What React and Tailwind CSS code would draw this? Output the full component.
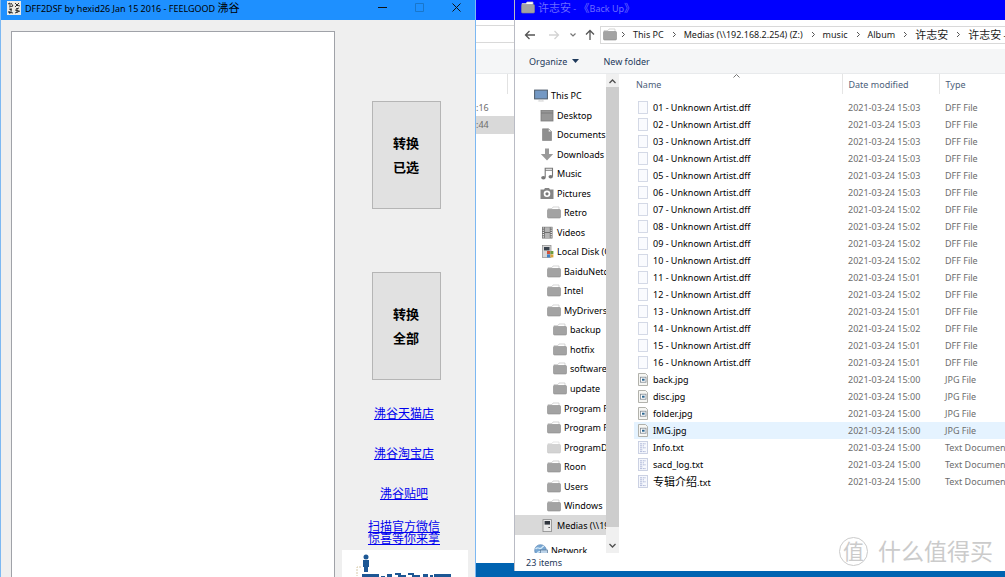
import React, { useState } from 'react';

const tree = [
  { name: 'This PC', icon: 'pc', level: 0 },
  { name: 'Desktop', icon: 'desktop', level: 1 },
  { name: 'Documents', icon: 'document', level: 1 },
  { name: 'Downloads', icon: 'download', level: 1 },
  { name: 'Music', icon: 'music', level: 1 },
  { name: 'Pictures', icon: 'camera', level: 1 },
  { name: 'Retro', icon: 'folder', level: 2 },
  { name: 'Videos', icon: 'video', level: 1 },
  { name: 'Local Disk (C:)', icon: 'disk', level: 1 },
  { name: 'BaiduNetdisk', icon: 'folder', level: 2 },
  { name: 'Intel', icon: 'folder', level: 2 },
  { name: 'MyDrivers', icon: 'folder', level: 2 },
  { name: 'backup', icon: 'folder', level: 3 },
  { name: 'hotfix', icon: 'folder', level: 3 },
  { name: 'software', icon: 'folder', level: 3 },
  { name: 'update', icon: 'folder', level: 3 },
  { name: 'Program Files', icon: 'folder', level: 2 },
  { name: 'Program Files (x86)', icon: 'folder', level: 2 },
  { name: 'ProgramData', icon: 'faded', level: 2 },
  { name: 'Roon', icon: 'folder', level: 2 },
  { name: 'Users', icon: 'folder', level: 2 },
  { name: 'Windows', icon: 'folder', level: 2 },
  { name: 'Medias (\\\\192.168.2.254)', icon: 'server', level: 1 },
];

const indents = ['pl-[19px]', 'pl-[25px]', 'pl-[32px]', 'pl-[38px]'];

const dffTimes = [
  '15:03', '15:03', '15:03', '15:03', '15:03', '15:03', '15:02', '15:02',
  '15:02', '15:02', '15:01', '15:02', '15:01', '15:02', '15:01', '15:01',
];

const files = [
  ...dffTimes.map((time, i) => ({
    name: `${String(i + 1).padStart(2, '0')} - Unknown Artist.dff`,
    date: `2021-03-24 ${time}`,
    type: 'DFF File',
    icon: 'blank',
  })),
  ...['back.jpg', 'disc.jpg', 'folder.jpg', 'IMG.jpg'].map((name) => ({
    name,
    date: '2021-03-24 15:00',
    type: 'JPG File',
    icon: 'image',
  })),
  ...['Info.txt', 'sacd_log.txt', '专辑介绍.txt'].map((name) => ({
    name,
    date: '2021-03-24 15:00',
    type: 'Text Document',
    icon: 'text',
  })),
];

const crumbs = ['This PC', 'Medias (\\\\192.168.2.254) (Z:)', 'music', 'Album', '许志安', '许志安 - 《Back Up》'];

const shapes = {
  folder: (
    <>
      <path d="M1 4V2.5h4L6 1h6v3" fill="#fff" stroke="#c4c4c4" strokeWidth=".7" />
      <rect x=".5" y="3.5" width="13" height="8.5" rx="1" fill="#a3a3a3" stroke="#8c8c8c" strokeWidth=".6" />
    </>
  ),
  faded: (
    <>
      <path d="M1 4V2.5h4L6 1h6v3" fill="#fff" stroke="#ddd" strokeWidth=".7" />
      <rect x=".5" y="3.5" width="13" height="8.5" rx="1" fill="#d3d3d3" stroke="#c6c6c6" strokeWidth=".6" />
    </>
  ),
  pc: (
    <>
      <rect x=".6" y="1.1" width="12.8" height="8.8" fill="#7398c4" stroke="#4d5b6b" strokeWidth="1" />
      <path d="M4.5 12.2L5.5 11h3l1 1.2z" fill="#fff" stroke="#bbb" strokeWidth=".5" />
    </>
  ),
  desktop: (
    <>
      <rect x="1" y="1.5" width="12" height="10.5" fill="#979797" stroke="#7c7c7c" strokeWidth=".8" />
      <path d="M1 4h12" stroke="#777" strokeWidth=".8" />
    </>
  ),
  document: (
    <>
      <path d="M2.5.8h6l3 3v8.7h-9z" fill="#8f8f8f" stroke="#7e7e7e" strokeWidth=".6" />
      <path d="M8.5.8v3h3z" fill="#fff" stroke="#888" strokeWidth=".5" />
    </>
  ),
  download: <path d="M5 .5h4V6h4.2L7 12.6.8 6H5z" fill="#9a9a9a" />,
  music: (
    <>
      <path d="M5.2 10.5V1.3h7.3v8.2M5.2 3.2h7.3" fill="none" stroke="#777" strokeWidth="1.1" />
      <ellipse cx="3.4" cy="10.8" rx="2.2" ry="1.7" fill="#777" />
      <ellipse cx="10.7" cy="9.8" rx="2.2" ry="1.7" fill="#777" />
    </>
  ),
  camera: (
    <>
      <path d="M.5 2.5H4L5 1h4l1 1.5h3.5V12H.5z" fill="#858585" />
      <circle cx="7" cy="6.8" r="3.3" fill="#fff" />
      <circle cx="7" cy="6.8" r="1.6" fill="#777" />
    </>
  ),
  video: (
    <>
      <rect x="2" y=".8" width="10.5" height="11.7" fill="#6f6f6f" />
      <path d="M4.8 1.2h5v4.9h-5zM4.8 7h5v5h-5z" fill="#b5b5b5" />
      <path d="M3.3 1.5v11M11.2 1.5v11" stroke="#fff" strokeWidth="1.1" strokeDasharray="1.1 1.1" />
    </>
  ),
  disk: (
    <>
      <rect x="2.5" y=".6" width="8.5" height="11.8" fill="#d7d7d7" stroke="#8b8b8b" strokeWidth=".7" />
      <rect x="4" y="2" width="5.5" height="3.4" fill="#39424d" />
      <path d="M7 6h3v3H7z" fill="#d2523a" />
      <path d="M10.4 6h3v3h-3z" fill="#6d9c3c" />
      <path d="M7 9.4h3v3H7z" fill="#3d7fc4" />
      <path d="M10.4 9.4h3v3h-3z" fill="#d9a53a" />
    </>
  ),
  server: (
    <>
      <rect x="3" y=".6" width="8.5" height="12" fill="#e9e9e9" stroke="#8b8b8b" strokeWidth=".8" />
      <rect x="4.6" y="2" width="5.4" height="3.6" fill="#30363e" />
      <path d="M8.4 8.5h1.6" stroke="#555" />
    </>
  ),
  network: (
    <>
      <circle cx="6.5" cy="6.5" r="5.8" fill="#79a8d4" stroke="#5c86b4" strokeWidth=".7" />
      <path d="M1.5 5c3-3 4 1 6-1s1-2 2.5-1.5M3 10c1-3 4-3 5-1" stroke="#d7ebf8" strokeWidth="1.3" fill="none" />
      <rect x="6.5" y="6" width="7" height="5" fill="#bdd4ea" stroke="#567594" strokeWidth=".7" />
    </>
  ),
};

function TreeIcon({ name }) {
  return (
    <svg viewBox="0 0 14 13" className="h-[13px] w-[14px] shrink-0" aria-hidden="true">
      {shapes[name]}
    </svg>
  );
}

function FileIcon({ name }) {
  return (
    <svg viewBox="0 0 11 13" className="h-[13px] w-[11px] shrink-0" aria-hidden="true">
      {name === 'blank' && <rect x=".5" y=".5" width="9" height="12" fill="#fafbfe" stroke="#d0d6e4" strokeWidth=".9" />}
      {name === 'image' && (
        <>
          <path d="M.5.5h7l2 2v10h-9z" fill="#f6f6f3" stroke="#a9a9a3" strokeWidth=".9" />
          <rect x="2.5" y="4.2" width="5.5" height="5" fill="#fff" stroke="#7d868f" strokeWidth=".8" />
          <rect x="4" y="5.7" width="2.6" height="2" fill="#2b6690" />
        </>
      )}
      {name === 'text' && (
        <>
          <rect x=".5" y=".5" width="9" height="12" fill="#f6f8fd" stroke="#c6cde0" strokeWidth=".9" />
          <path d="M2 2.8h6M2 4.8h4M2 6.8h6M2 8.8h3M2 10.6h6" stroke="#9ea9cf" strokeWidth=".8" strokeDasharray="2 .7" />
        </>
      )}
    </svg>
  );
}

function Chevron() {
  return (
    <svg viewBox="0 0 5 7" className="h-[7px] w-[5px] shrink-0" aria-hidden="true">
      <path d="M1 1l2.5 2.5L1 6" fill="none" stroke="#555" />
    </svg>
  );
}

// Chinese runs are set a little larger than the latin text around them
function Label({ text }) {
  return (
    <span className="whitespace-pre">
      {text.split(/([\u3000-\u9fff]+)/).map((part, i) =>
        i % 2 ? <span key={i} className="text-[11px]">{part}</span> : part
      )}
    </span>
  );
}

function ConverterWindow() {
  return (
    <section className="flex w-[476px] shrink-0 flex-col border-x border-[#7cb8f2] bg-[#efefef]">
      <header className="flex h-5 shrink-0 items-start bg-[#1e90ff] pl-[6px] text-black">
        <svg viewBox="0 0 14 14" className="mt-px size-[14px] shrink-0" aria-hidden="true">
          <rect width="14" height="14" fill="#ecebe6" />
          <path
            d="M1 3l2-1v3M4 2l2 3M2 6l4-1M8 2l3 3M12 2L8 6M9 4l4 1M2 8l3 1M4 7v5M1 11l5 1M9 8l3-1M10 7v5M8 12l5-2M8 9l4 1M2 10l1 3"
            stroke="#222"
            fill="none"
            strokeWidth=".9"
          />
        </svg>
        <h1 className="ml-1 flex-1 leading-4"><Label text="DFF2DSF by hexid26 Jan 15 2016 - FEELGOOD 沸谷" /></h1>
        <div className="flex h-[15px]">
          <button aria-label="Minimize" className="flex w-[37px] items-center justify-center">
            <svg viewBox="0 0 9 9" className="size-[9px]"><path d="M0 4.5h9" stroke="#111" /></svg>
          </button>
          <button aria-label="Maximize" disabled className="flex w-[37px] items-center justify-center">
            <svg viewBox="0 0 9 9" className="size-[9px]"><path d="M.5.5h8v8h-8z" fill="none" stroke="#1976cb" /></svg>
          </button>
          <button aria-label="Close" className="flex w-[37px] items-center justify-center">
            <svg viewBox="0 0 9 9" className="size-[9px]"><path d="M.5.5l8 8M8.5.5l-8 8" stroke="#111" /></svg>
          </button>
        </div>
      </header>
      <div className="flex min-h-0 flex-1 pt-[11px] pl-[10px]">
        <select
          multiple
          aria-label="Files"
          className="flex-1 appearance-none rounded-none border border-b-0 border-[#a0a2a8] bg-white outline-none"
        />
        <div className="flex w-[140px] shrink-0 flex-col items-center overflow-hidden pt-[70px] pl-[2px]">
          <ActionButton top="转换" bottom="已选" />
          <div className="h-[63px] shrink-0" />
          <ActionButton top="转换" bottom="全部" />
          <nav className="mt-7 flex shrink-0 flex-col items-center pr-1 text-xs leading-3 text-[#0000ee] underline">
            <a href="#tmall" className="mb-7">沸谷天猫店</a>
            <a href="#taobao" className="mb-7">沸谷淘宝店</a>
            <a href="#tieba" className="mb-[21px]">沸谷贴吧</a>
            <a href="#wechat" className="text-center">扫描官方微信<br />惊喜等你来拿</a>
          </nav>
          <svg viewBox="0 0 126 60" className="mt-[5px] mr-[2px] h-[60px] w-[126px] shrink-0" aria-hidden="true">
            <rect width="126" height="60" fill="#fff" />
            <g fill="#1d5794">
              <circle cx="24" cy="7" r="2.5" />
              <path d="M21 10h6v7h-1v5h-4v-5h-1z" />
              <path d="M20 24h17v3H20zM39 26h4v1h-4zM45 24h5v3h-5zM53 23h6v2h-6zM56 25h8v2h-8zM66 23h6v2h-6zM70 25h8v2h-8zM81 24h5v3h-5zM88 25h3v2h-3zM92 24h17v3H92z" />
            </g>
            <path d="M19 17h-4v9" fill="none" stroke="#d6c9a8" strokeDasharray="2 1" />
          </svg>
        </div>
      </div>
    </section>
  );
}

function ActionButton({ top, bottom }) {
  return (
    <button className="h-[108px] w-[69px] shrink-0 border border-[#b5b5b5] bg-[#e1e1e1] text-[13px] leading-6 font-bold text-black">
      {top}
      <br />
      {bottom}
    </button>
  );
}

// only a narrow slice of this window shows between the other two
function BackgroundWindow() {
  return (
    <section className="mb-[14px] flex w-[38px] shrink-0 flex-col overflow-hidden bg-white text-[#6d6d6d]">
      <div className="h-5 shrink-0 bg-[#0000ff]" />
      <div className="mt-[5px] h-[18px] shrink-0 border-y border-[#d9d9d9]" />
      <div className="mt-[6px] h-[25px] shrink-0 border-b border-[#e8eaec] bg-[#f5f6f7]" />
      <div className="h-5 w-8 shrink-0 border-r border-[#e2e2e2]" />
      <div className="mt-[5px] h-[17px] leading-[17px]">:16</div>
      <div className="h-[18px] bg-[#d9d9d9] leading-[17px]">:44</div>
    </section>
  );
}

function Explorer() {
  const [selected, setSelected] = useState('Medias (\\\\192.168.2.254)');

  return (
    <section className="mb-[6px] flex min-w-0 flex-1 flex-col border-l border-[#b9bbc4] bg-white">
      <header className="flex h-5 shrink-0 items-start bg-[#0000ff] pl-[6px] text-[#6c6cff]">
        <div className="mt-px flex"><TreeIcon name="folder" /></div>
        <h2 className="ml-[3px] leading-4"><Label text="许志安 - 《Back Up》" /></h2>
      </header>

      <div className="flex h-[29px] shrink-0 items-center pl-[9px]">
        <button aria-label="Back" className="mr-3">
          <svg viewBox="0 0 12 10" className="h-[10px] w-3"><path d="M11 5H1.500M5.500 1l-4 4 4 4" fill="none" stroke="#555" strokeWidth="1.3" /></svg>
        </button>
        <button aria-label="Forward" disabled className="mr-[10px]">
          <svg viewBox="0 0 12 10" className="h-[10px] w-3"><path d="M1 5h9.500M6.500 1l4 4-4 4" fill="none" stroke="#d3d3d3" strokeWidth="1.3" /></svg>
        </button>
        <button aria-label="Recent locations" className="mr-[9px]">
          <svg viewBox="0 0 6 4" className="h-1 w-[6px]"><path d="M.5.5L3 3 5.500.5" fill="none" stroke="#777" strokeWidth="1.2" /></svg>
        </button>
        <button aria-label="Up" className="mr-[5px]">
          <svg viewBox="0 0 10 11" className="h-[11px] w-[10px]"><path d="M5 11V1.500M1 5.500l4-4 4 4" fill="none" stroke="#555" strokeWidth="1.3" /></svg>
        </button>
        <nav className="flex h-[18px] min-w-0 flex-1 items-center overflow-hidden border-y border-l border-[#d9d9d9] pl-[2px] text-[#1a1a1a]">
          <TreeIcon name="folder" />
          {crumbs.map((crumb, i) => (
            <span key={i} className="flex shrink-0 items-center">
              <span className="mr-[3px] ml-1 flex"><Chevron /></span>
              <button className="px-1"><Label text={crumb} /></button>
            </span>
          ))}
        </nav>
      </div>

      <div className="flex h-[25px] shrink-0 items-center gap-6 border-b border-[#e8eaec] bg-[#f5f6f7] pl-[14px] text-[#1e395b]">
        <button className="flex items-center gap-[5px]">
          Organize
          <svg viewBox="0 0 7 4" className="h-1 w-[7px]"><path d="M0 0h7L3.500 4z" fill="#1e395b" /></svg>
        </button>
        <button>New folder</button>
      </div>

      <div className="flex min-h-0 flex-1">
        <div className="w-[91px] shrink-0 overflow-hidden pt-3">
          <ul className="flex h-[449px] flex-col text-black">
            {tree.map((item, i) => (
              <li key={i} className="flex min-h-0 flex-1">
                <button
                  onClick={() => setSelected(item.name)}
                  className={`flex w-full items-center gap-[3px] overflow-hidden whitespace-nowrap ${indents[item.level]} ${
                    selected === item.name ? 'bg-[#d9d9d9]' : ''
                  }`}
                >
                  <TreeIcon name={item.icon} />
                  {item.name}
                </button>
              </li>
            ))}
          </ul>
          <button className="mt-[9px] flex items-center gap-[3px] pl-[19px] text-black">
            <TreeIcon name="network" />
            Network
          </button>
        </div>

        <div className="flex w-[13px] shrink-0 flex-col items-center bg-[#f0f0f0]">
          <svg viewBox="0 0 7 5" className="mt-[5px] mb-[3px] h-[5px] w-[7px] shrink-0"><path d="M.5 4l3-3 3 3" fill="none" stroke="#505050" strokeWidth="1.3" /></svg>
          <div className="h-[440px] w-full bg-[#cdcdcd]" />
          <svg viewBox="0 0 7 5" className="mt-auto mb-[5px] h-[5px] w-[7px] shrink-0"><path d="M.5 1l3 3 3-3" fill="none" stroke="#505050" strokeWidth="1.3" /></svg>
        </div>

        <div className="ml-[15px] min-w-0 flex-1 overflow-hidden">
          <table className="w-full table-fixed border-collapse whitespace-nowrap text-left text-[#6d6d6d]">
            <colgroup>
              <col className="w-[208px]" />
              <col className="w-[97px]" />
              <col />
            </colgroup>
            <thead>
              <tr className="h-5 text-[#4c607a]">
                <th className="relative border-r border-[#e5e5e5] p-0 pl-[2px] font-normal">
                  Name
                  <svg viewBox="0 0 7 4" className="absolute top-0 left-[99px] h-1 w-[7px]" aria-hidden="true"><path d="M.5 3.500l3-3 3 3" fill="none" stroke="#777" /></svg>
                </th>
                <th className="border-r border-[#e5e5e5] p-0 pl-[6px] font-normal">Date modified</th>
                <th className="p-0 pl-[6px] font-normal">Type</th>
              </tr>
            </thead>
            <tbody>
              <tr aria-hidden="true" className="h-[5px]"><td colSpan={3} className="p-0" /></tr>
              {files.map((file) => (
                <tr key={file.name} className={`h-[17px] ${file.name === 'IMG.jpg' ? 'bg-[#e5f3ff]' : ''}`}>
                  <td className="p-0 pl-1 text-black">
                    <div className="flex h-[17px] items-center gap-1">
                      <FileIcon name={file.icon} />
                      <Label text={file.name} />
                    </div>
                  </td>
                  <td className="p-0 pl-[6px]">{file.date}</td>
                  <td className="overflow-hidden p-0 pl-[6px]">{file.type}</td>
                </tr>
              ))}
            </tbody>
          </table>
        </div>
      </div>

      <footer className="flex h-[18px] shrink-0 items-center pl-[11px] text-[#1e395b]">{files.length} items</footer>
    </section>
  );
}

function App() {
  return (
    <div className="relative flex h-screen overflow-hidden bg-[#0063b1] font-['Noto_Sans','Noto_Sans_CJK_SC',sans-serif] text-[9px] leading-[13px]">
      <ConverterWindow />
      <BackgroundWindow />
      <Explorer />
      <div className="pointer-events-none absolute right-3 bottom-[11px] flex items-center gap-[10px] text-[#cbcbcb]">
        <span className="flex size-[29px] items-center justify-center rounded-full border border-[#cbcbcb] text-[21px] leading-[29px]">值</span>
        <span className="text-[23px] leading-[29px]">什么值得买</span>
      </div>
    </div>
  );
}

export default App;
